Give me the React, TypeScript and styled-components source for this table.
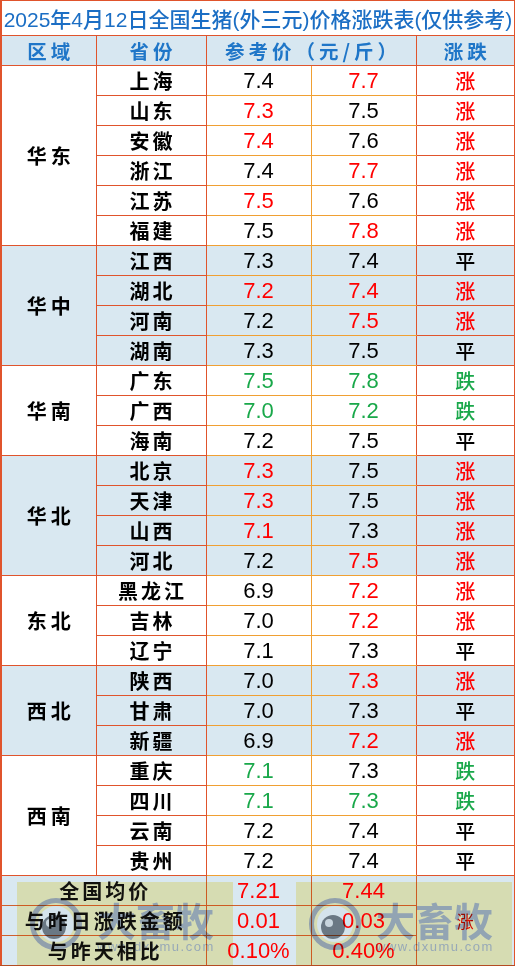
import * as React from 'react';
import styled, { createGlobalStyle } from 'styled-components';

const GlobalStyle = createGlobalStyle`
  html, body {
    margin: 0;
    padding: 0;
    background: #ffffff;
  }
  body {
    font-family: 'Noto Sans CJK SC', sans-serif;
  }
`;

type Tone = 'k' | 'r' | 'g';

const toneColor: Record<Tone, string> = {
  k: '#000000',
  r: '#ff0000',
  g: '#19a84a',
};

const trendTone: Record<string, Tone> = {
  涨: 'r',
  跌: 'g',
  平: 'k',
};

interface Row {
  name: string;
  ref: [string, Tone];
  cur: [string, Tone];
  trend: string;
}

interface Group {
  region: string;
  shaded: boolean;
  rows: Row[];
}

const groups: Group[] = [
  {
    region: '华东',
    shaded: false,
    rows: [
      { name: '上海', ref: ['7.4', 'k'], cur: ['7.7', 'r'], trend: '涨' },
      { name: '山东', ref: ['7.3', 'r'], cur: ['7.5', 'k'], trend: '涨' },
      { name: '安徽', ref: ['7.4', 'r'], cur: ['7.6', 'k'], trend: '涨' },
      { name: '浙江', ref: ['7.4', 'k'], cur: ['7.7', 'r'], trend: '涨' },
      { name: '江苏', ref: ['7.5', 'r'], cur: ['7.6', 'k'], trend: '涨' },
      { name: '福建', ref: ['7.5', 'k'], cur: ['7.8', 'r'], trend: '涨' },
    ],
  },
  {
    region: '华中',
    shaded: true,
    rows: [
      { name: '江西', ref: ['7.3', 'k'], cur: ['7.4', 'k'], trend: '平' },
      { name: '湖北', ref: ['7.2', 'r'], cur: ['7.4', 'r'], trend: '涨' },
      { name: '河南', ref: ['7.2', 'k'], cur: ['7.5', 'r'], trend: '涨' },
      { name: '湖南', ref: ['7.3', 'k'], cur: ['7.5', 'k'], trend: '平' },
    ],
  },
  {
    region: '华南',
    shaded: false,
    rows: [
      { name: '广东', ref: ['7.5', 'g'], cur: ['7.8', 'g'], trend: '跌' },
      { name: '广西', ref: ['7.0', 'g'], cur: ['7.2', 'g'], trend: '跌' },
      { name: '海南', ref: ['7.2', 'k'], cur: ['7.5', 'k'], trend: '平' },
    ],
  },
  {
    region: '华北',
    shaded: true,
    rows: [
      { name: '北京', ref: ['7.3', 'r'], cur: ['7.5', 'k'], trend: '涨' },
      { name: '天津', ref: ['7.3', 'r'], cur: ['7.5', 'k'], trend: '涨' },
      { name: '山西', ref: ['7.1', 'r'], cur: ['7.3', 'k'], trend: '涨' },
      { name: '河北', ref: ['7.2', 'k'], cur: ['7.5', 'r'], trend: '涨' },
    ],
  },
  {
    region: '东北',
    shaded: false,
    rows: [
      { name: '黑龙江', ref: ['6.9', 'k'], cur: ['7.2', 'r'], trend: '涨' },
      { name: '吉林', ref: ['7.0', 'k'], cur: ['7.2', 'r'], trend: '涨' },
      { name: '辽宁', ref: ['7.1', 'k'], cur: ['7.3', 'k'], trend: '平' },
    ],
  },
  {
    region: '西北',
    shaded: true,
    rows: [
      { name: '陕西', ref: ['7.0', 'k'], cur: ['7.3', 'r'], trend: '涨' },
      { name: '甘肃', ref: ['7.0', 'k'], cur: ['7.3', 'k'], trend: '平' },
      { name: '新疆', ref: ['6.9', 'k'], cur: ['7.2', 'r'], trend: '涨' },
    ],
  },
  {
    region: '西南',
    shaded: false,
    rows: [
      { name: '重庆', ref: ['7.1', 'g'], cur: ['7.3', 'k'], trend: '跌' },
      { name: '四川', ref: ['7.1', 'g'], cur: ['7.3', 'g'], trend: '跌' },
      { name: '云南', ref: ['7.2', 'k'], cur: ['7.4', 'k'], trend: '平' },
      { name: '贵州', ref: ['7.2', 'k'], cur: ['7.4', 'k'], trend: '平' },
    ],
  },
];

const summary = [
  { label: '全国均价', ref: '7.21', cur: '7.44' },
  { label: '与昨日涨跌金额', ref: '0.01', cur: '0.03' },
  { label: '与昨天相比', ref: '0.10%', cur: '0.40%' },
];

const LINE = '#e0542c';
const SOFT = '#f0a033';
const SHADE = '#d9e8f1';

const Page = styled.div`
  position: relative;
  width: 514px;
`;

const Sheet = styled.table`
  width: 514px;
  border-collapse: collapse;
  table-layout: fixed;
  border-left: 2px solid ${LINE};
  border-right: 2px solid ${LINE};
  border-bottom: 3px solid #b44c22;
`;

const TitleCell = styled.td`
  height: 34px;
  padding: 0;
  border-top: 1px solid ${LINE};
  border-bottom: 1px solid ${LINE};
  text-align: center;
  white-space: nowrap;
  font-family: 'Liberation Sans', 'Noto Sans CJK SC', sans-serif;
  font-size: 21px;
  font-weight: 500;
  color: #1b6ec4;
`;

const HeadRow = styled.tr`
  background: #d7e7f1;
`;

const HeadCell = styled.th`
  height: 29px;
  padding: 0;
  border: 1px solid ${LINE};
  text-align: center;
  font-weight: 700;
  font-size: 19.5px;
  letter-spacing: 4px;
  text-indent: 4px;
  color: #1f76c8;
  white-space: nowrap;
`;

const DataRow = styled.tr<{ $shaded: boolean }>`
  background: ${(p) => (p.$shaded ? SHADE : '#ffffff')};
`;

const RegionCell = styled.td`
  padding: 0;
  border: 1px solid ${LINE};
  text-align: center;
  font-weight: 700;
  font-size: 20px;
  letter-spacing: 4px;
  text-indent: 4px;
  color: #000;
`;

const NameCell = styled.td`
  height: 29px;
  padding: 0;
  border: 1px solid ${LINE};
  text-align: center;
  font-weight: 700;
  font-size: 20px;
  letter-spacing: 3px;
  text-indent: 3px;
  color: #000;
  white-space: nowrap;
`;

const NumCell = styled.td<{ $tone: Tone; $side: 'left' | 'right' }>`
  padding: 0;
  border-top: 1px solid ${SOFT};
  border-bottom: 1px solid ${SOFT};
  border-left: 1px solid ${(p) => (p.$side === 'left' ? LINE : SOFT)};
  border-right: 1px solid ${(p) => (p.$side === 'right' ? LINE : SOFT)};
  text-align: center;
  font-family: 'Liberation Sans', Arial, sans-serif;
  font-size: 22px;
  color: ${(p) => toneColor[p.$tone]};
`;

const TrendCell = styled.td<{ $tone: Tone }>`
  padding: 0;
  border: 1px solid ${LINE};
  text-align: center;
  font-size: 20px;
  font-weight: 500;
  color: ${(p) => toneColor[p.$tone]};
`;

const SumRow = styled.tr`
  background: ${SHADE};
`;

const SumLabel = styled.td<{ $last?: boolean }>`
  height: ${(p) => (p.$last ? 28 : 29)}px;
  padding: 0;
  border: 1px solid #d0602e;
  text-align: center;
  font-weight: 700;
  font-size: 20px;
  letter-spacing: 3px;
  text-indent: 3px;
  color: #111;
  white-space: nowrap;
`;

const SumNum = styled.td`
  padding: 0;
  border: 1px solid #d0602e;
  text-align: center;
  font-family: 'Liberation Sans', Arial, sans-serif;
  font-size: 22px;
  color: #ff0000;
`;

const SumTrend = styled.td`
  padding: 0;
  border: 1px solid #d0602e;
  text-align: center;
  font-size: 17px;
  color: #e01000;
`;

/* watermark stamp: multiplied over the table so the text stays readable */
const Stamp = styled.div<{ $left: number }>`
  position: absolute;
  left: ${(p) => p.$left}px;
  bottom: 3px;
  width: 216px;
  height: 83px;
  display: flex;
  align-items: center;
  gap: 14px;
  padding-left: 12px;
  box-sizing: border-box;
  background: rgb(252, 242, 189);
  mix-blend-mode: multiply;
  pointer-events: none;
`;

const StampText = styled.div`
  display: flex;
  flex-direction: column;
  align-items: flex-start;
  padding-top: 6px;
`;

const Brand = styled.span`
  font-size: 39px;
  line-height: 40px;
  font-weight: 700;
  color: rgb(172, 180, 190);
`;

const Site = styled.span`
  font-family: 'Liberation Sans', Arial, sans-serif;
  font-size: 13px;
  line-height: 15px;
  letter-spacing: 1.5px;
  color: rgb(178, 186, 194);
`;

const Logo = () => (
  <svg width="54" height="54" viewBox="0 0 54 54">
    <circle cx="27" cy="27" r="23.5" fill="none" stroke="rgb(170,176,182)" strokeWidth="5" />
    <circle cx="27" cy="27" r="18" fill="rgb(250,250,250)" />
    <circle cx="25" cy="30" r="12" fill="rgb(125,132,140)" />
    <circle cx="21" cy="26" r="4" fill="rgb(235,235,235)" />
  </svg>
);

const Watermark: React.FC<{ left: number }> = ({ left }) => (
  <Stamp $left={left}>
    <Logo />
    <StampText>
      <Brand>大畜牧</Brand>
      <Site>www.dxumu.com</Site>
    </StampText>
  </Stamp>
);

export default function App() {
  return (
    <Page>
      <GlobalStyle />
      <Sheet>
        <colgroup>
          <col style={{ width: 95 }} />
          <col style={{ width: 110 }} />
          <col style={{ width: 105 }} />
          <col style={{ width: 105 }} />
          <col style={{ width: 99 }} />
        </colgroup>
        <tbody>
          <tr>
            <TitleCell colSpan={5}>2025年4月12日全国生猪(外三元)价格涨跌表(仅供参考)</TitleCell>
          </tr>
          <HeadRow>
            <HeadCell>区域</HeadCell>
            <HeadCell>省份</HeadCell>
            <HeadCell colSpan={2}>参考价（元/斤）</HeadCell>
            <HeadCell>涨跌</HeadCell>
          </HeadRow>
          {groups.map((g) =>
            g.rows.map((r, i) => (
              <DataRow key={g.region + r.name} $shaded={g.shaded}>
                {i === 0 && <RegionCell rowSpan={g.rows.length}>{g.region}</RegionCell>}
                <NameCell>{r.name}</NameCell>
                <NumCell $tone={r.ref[1]} $side="left">{r.ref[0]}</NumCell>
                <NumCell $tone={r.cur[1]} $side="right">{r.cur[0]}</NumCell>
                <TrendCell $tone={trendTone[r.trend]}>{r.trend}</TrendCell>
              </DataRow>
            ))
          )}
          {summary.map((s, i) => (
            <SumRow key={s.label}>
              <SumLabel colSpan={2} $last={i === summary.length - 1}>{s.label}</SumLabel>
              <SumNum>{s.ref}</SumNum>
              <SumNum>{s.cur}</SumNum>
              {i === 0 && <SumTrend rowSpan={summary.length}>涨</SumTrend>}
            </SumRow>
          ))}
        </tbody>
      </Sheet>
      <Watermark left={17} />
      <Watermark left={296} />
    </Page>
  );
}
